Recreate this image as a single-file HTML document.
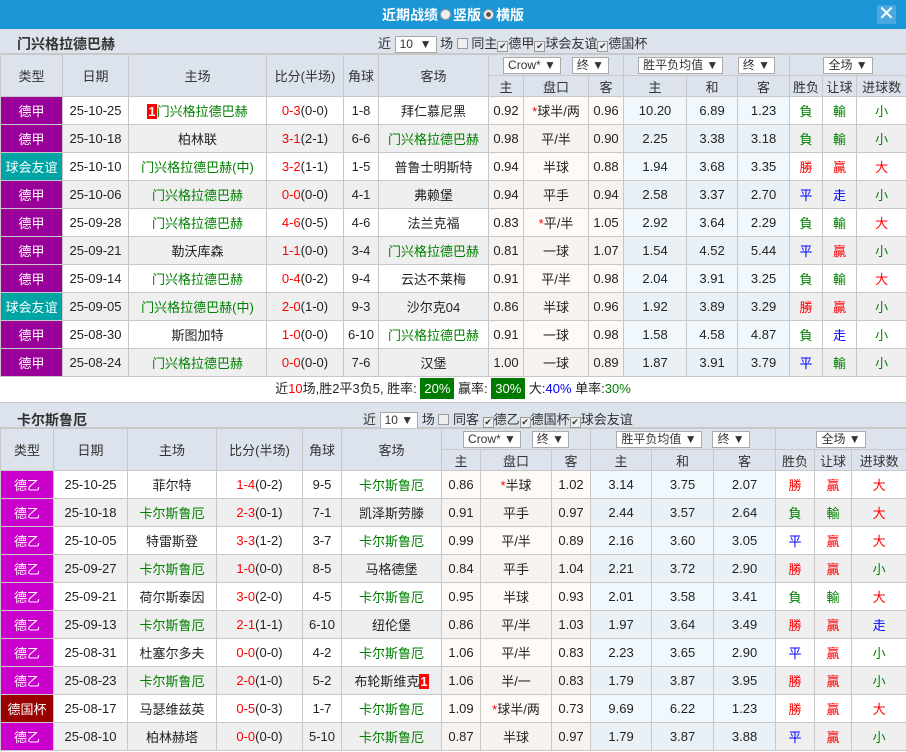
<!DOCTYPE html>
<html><head><meta charset="utf-8">
<style>
*{margin:0;padding:0;box-sizing:border-box}
body{width:906px;height:752px;overflow:hidden;background:#fff;font-family:"Liberation Sans","Noto Sans CJK SC",sans-serif;font-size:13px;color:#222;position:relative}
.top{position:absolute;left:0;top:0;width:906px;height:29px;background:#1b96d6;color:#fff;font-weight:bold;font-size:14px}
.top .t{position:absolute;left:382px;top:5px}
.top .r{display:inline-block;width:11px;height:11px;border-radius:50%;background:#eee;border:1px solid #999;vertical-align:0;margin:0 2px}
.top .r.on{background:radial-gradient(#555 35%,#eee 40%)}
.x{position:absolute;left:877px;top:5px;width:19px;height:19px;background:#4aa8e0;color:#fff;font-size:20px;line-height:18px;text-align:center;font-weight:normal}
.sec{position:absolute;left:0;width:906px;background:#dce3ec;height:25px;border-bottom:1px solid #c8c8c8}
.sec b{position:absolute;left:17px;top:5px;font-size:14px;color:#333}
.sec .c{position:absolute;top:4px;font-size:13px;color:#333;white-space:nowrap}
.sel{display:inline-block;border:1px solid #aaa;background:#fff;padding:0 4px;height:17px;line-height:15px;font-size:12px;vertical-align:middle}
.cb{display:inline-block;width:11px;height:11px;border:1px solid #999;background:#eee;vertical-align:-1px;font-size:9px;line-height:9px;text-align:center;color:#333}
table{position:absolute;left:0;border-collapse:collapse;table-layout:fixed;width:906px}
td{border:1px solid #c8c8c8;text-align:center;white-space:nowrap;overflow:hidden;padding:0}
thead td{background:#dce3ec;height:21px;color:#333}
tbody td{height:28px}
tbody tr:nth-child(even) td{background:#efefef}
tbody td.o{background:#fffaf5!important}
tbody td.p{background:#f0f8fd!important}
tbody tr:nth-child(even) td.o{background:#f7f2ee!important}
tbody tr:nth-child(even) td.p{background:#e9f1f6!important}
td.a{background:#990099!important;color:#fff}
td.f{background:#00a4a4!important;color:#fff}
td.b{background:#cc00cc!important;color:#fff}
td.k{background:#990000!important;color:#fff}
.g{color:#008000}.rd{color:#f00}.bl{color:#00f}.dk{color:#333}
.n{background:#f00;color:#fff;font-weight:bold;padding:0 1px}
.st{color:#f00}
.sum{position:absolute;left:0;top:376px;width:906px;height:26px;text-align:center;line-height:26px;font-size:13px}
.gb{background:#007a00;color:#fff;padding:3px 4px}
</style></head><body>
<div class="top"><span class="t">近期战绩<span class="r"></span>竖版<span class="r on"></span>横版</span><div class="x">✕</div></div>

<div class="sec" style="top:29px"><b>门兴格拉德巴赫</b>
<span class="c" style="left:378px">近 <span class="sel">10 &nbsp;▼</span> 场 <span class="cb"></span> 同主<span class="cb">✔</span>德甲<span class="cb">✔</span>球会友谊<span class="cb">✔</span>德国杯</span></div>

<table style="top:54px">
<colgroup><col style="width:62px"><col style="width:66px"><col style="width:138px"><col style="width:77px"><col style="width:35px"><col style="width:110px"><col style="width:35px"><col style="width:65px"><col style="width:35px"><col style="width:63px"><col style="width:51px"><col style="width:52px"><col style="width:33px"><col style="width:34px"><col style="width:50px"></colgroup>
<thead><tr><td rowspan="2">类型</td><td rowspan="2">日期</td><td rowspan="2">主场</td><td rowspan="2">比分(半场)</td><td rowspan="2">角球</td><td rowspan="2">客场</td><td colspan="3"><span class="sel">Crow* ▼</span> &nbsp; <span class="sel">终 ▼</span></td><td colspan="3"><span class="sel">胜平负均值 ▼</span> &nbsp; &nbsp;<span class="sel">终 ▼</span></td><td colspan="3"><span class="sel">全场 ▼</span></td></tr>
<tr><td>主</td><td>盘口</td><td>客</td><td>主</td><td>和</td><td>客</td><td>胜负</td><td>让球</td><td>进球数</td></tr></thead>
<tbody>
<tr><td class="a">德甲</td><td>25-10-25</td><td class="g"><span class="n">1</span>门兴格拉德巴赫</td><td><span class="rd">0-3</span>(0-0)</td><td>1-8</td><td>拜仁慕尼黑</td><td class="o">0.92</td><td class="o"><span class="st">*</span>球半/两</td><td class="o">0.96</td><td class="p">10.20</td><td class="p">6.89</td><td class="p">1.23</td><td class="g">負</td><td class="g">輸</td><td class="g">小</td></tr>
<tr><td class="a">德甲</td><td>25-10-18</td><td>柏林联</td><td><span class="rd">3-1</span>(2-1)</td><td>6-6</td><td class="g">门兴格拉德巴赫</td><td class="o">0.98</td><td class="o">平/半</td><td class="o">0.90</td><td class="p">2.25</td><td class="p">3.38</td><td class="p">3.18</td><td class="g">負</td><td class="g">輸</td><td class="g">小</td></tr>
<tr><td class="f">球会友谊</td><td>25-10-10</td><td class="g">门兴格拉德巴赫(中)</td><td><span class="rd">3-2</span>(1-1)</td><td>1-5</td><td>普鲁士明斯特</td><td class="o">0.94</td><td class="o">半球</td><td class="o">0.88</td><td class="p">1.94</td><td class="p">3.68</td><td class="p">3.35</td><td class="rd">勝</td><td class="rd">贏</td><td class="rd">大</td></tr>
<tr><td class="a">德甲</td><td>25-10-06</td><td class="g">门兴格拉德巴赫</td><td><span class="rd">0-0</span>(0-0)</td><td>4-1</td><td>弗赖堡</td><td class="o">0.94</td><td class="o">平手</td><td class="o">0.94</td><td class="p">2.58</td><td class="p">3.37</td><td class="p">2.70</td><td class="bl">平</td><td class="bl">走</td><td class="g">小</td></tr>
<tr><td class="a">德甲</td><td>25-09-28</td><td class="g">门兴格拉德巴赫</td><td><span class="rd">4-6</span>(0-5)</td><td>4-6</td><td>法兰克福</td><td class="o">0.83</td><td class="o"><span class="st">*</span>平/半</td><td class="o">1.05</td><td class="p">2.92</td><td class="p">3.64</td><td class="p">2.29</td><td class="g">負</td><td class="g">輸</td><td class="rd">大</td></tr>
<tr><td class="a">德甲</td><td>25-09-21</td><td>勒沃库森</td><td><span class="rd">1-1</span>(0-0)</td><td>3-4</td><td class="g">门兴格拉德巴赫</td><td class="o">0.81</td><td class="o">一球</td><td class="o">1.07</td><td class="p">1.54</td><td class="p">4.52</td><td class="p">5.44</td><td class="bl">平</td><td class="rd">贏</td><td class="g">小</td></tr>
<tr><td class="a">德甲</td><td>25-09-14</td><td class="g">门兴格拉德巴赫</td><td><span class="rd">0-4</span>(0-2)</td><td>9-4</td><td>云达不莱梅</td><td class="o">0.91</td><td class="o">平/半</td><td class="o">0.98</td><td class="p">2.04</td><td class="p">3.91</td><td class="p">3.25</td><td class="g">負</td><td class="g">輸</td><td class="rd">大</td></tr>
<tr><td class="f">球会友谊</td><td>25-09-05</td><td class="g">门兴格拉德巴赫(中)</td><td><span class="rd">2-0</span>(1-0)</td><td>9-3</td><td>沙尔克04</td><td class="o">0.86</td><td class="o">半球</td><td class="o">0.96</td><td class="p">1.92</td><td class="p">3.89</td><td class="p">3.29</td><td class="rd">勝</td><td class="rd">贏</td><td class="g">小</td></tr>
<tr><td class="a">德甲</td><td>25-08-30</td><td>斯图加特</td><td><span class="rd">1-0</span>(0-0)</td><td>6-10</td><td class="g">门兴格拉德巴赫</td><td class="o">0.91</td><td class="o">一球</td><td class="o">0.98</td><td class="p">1.58</td><td class="p">4.58</td><td class="p">4.87</td><td class="g">負</td><td class="bl">走</td><td class="g">小</td></tr>
<tr><td class="a">德甲</td><td>25-08-24</td><td class="g">门兴格拉德巴赫</td><td><span class="rd">0-0</span>(0-0)</td><td>7-6</td><td>汉堡</td><td class="o">1.00</td><td class="o">一球</td><td class="o">0.89</td><td class="p">1.87</td><td class="p">3.91</td><td class="p">3.79</td><td class="bl">平</td><td class="g">輸</td><td class="g">小</td></tr>
</tbody></table>

<div class="sum">近<span class="rd">10</span>场,胜2平3负5, 胜率: <span class="gb">20%</span> 赢率: <span class="gb">30%</span> 大:<span class="bl">40%</span> 单率:<span class="g">30%</span></div>

<div class="sec" style="top:402px;height:26px;border-top:1px solid #c8c8c8"><b style="top:7px">卡尔斯鲁厄</b>
<span class="c" style="left:363px;top:6px">近 <span class="sel">10 ▼</span> 场 <span class="cb"></span> 同客 <span class="cb">✔</span>德乙<span class="cb">✔</span>德国杯<span class="cb">✔</span>球会友谊</span></div>

<table style="top:428px">
<colgroup><col style="width:53px"><col style="width:74px"><col style="width:89px"><col style="width:86px"><col style="width:39px"><col style="width:100px"><col style="width:39px"><col style="width:71px"><col style="width:39px"><col style="width:61px"><col style="width:62px"><col style="width:62px"><col style="width:39px"><col style="width:37px"><col style="width:55px"></colgroup>
<thead><tr><td rowspan="2">类型</td><td rowspan="2">日期</td><td rowspan="2">主场</td><td rowspan="2">比分(半场)</td><td rowspan="2">角球</td><td rowspan="2">客场</td><td colspan="3"><span class="sel">Crow* ▼</span> &nbsp; <span class="sel">终 ▼</span></td><td colspan="3"><span class="sel">胜平负均值 ▼</span> &nbsp; <span class="sel">终 ▼</span></td><td colspan="3"><span class="sel">全场 ▼</span></td></tr>
<tr><td>主</td><td>盘口</td><td>客</td><td>主</td><td>和</td><td>客</td><td>胜负</td><td>让球</td><td>进球数</td></tr></thead>
<tbody>
<tr><td class="b">德乙</td><td>25-10-25</td><td>菲尔特</td><td><span class="rd">1-4</span>(0-2)</td><td>9-5</td><td class="g">卡尔斯鲁厄</td><td class="o">0.86</td><td class="o"><span class="st">*</span>半球</td><td class="o">1.02</td><td class="p">3.14</td><td class="p">3.75</td><td class="p">2.07</td><td class="rd">勝</td><td class="rd">贏</td><td class="rd">大</td></tr>
<tr><td class="b">德乙</td><td>25-10-18</td><td class="g">卡尔斯鲁厄</td><td><span class="rd">2-3</span>(0-1)</td><td>7-1</td><td>凯泽斯劳滕</td><td class="o">0.91</td><td class="o">平手</td><td class="o">0.97</td><td class="p">2.44</td><td class="p">3.57</td><td class="p">2.64</td><td class="g">負</td><td class="g">輸</td><td class="rd">大</td></tr>
<tr><td class="b">德乙</td><td>25-10-05</td><td>特雷斯登</td><td><span class="rd">3-3</span>(1-2)</td><td>3-7</td><td class="g">卡尔斯鲁厄</td><td class="o">0.99</td><td class="o">平/半</td><td class="o">0.89</td><td class="p">2.16</td><td class="p">3.60</td><td class="p">3.05</td><td class="bl">平</td><td class="rd">贏</td><td class="rd">大</td></tr>
<tr><td class="b">德乙</td><td>25-09-27</td><td class="g">卡尔斯鲁厄</td><td><span class="rd">1-0</span>(0-0)</td><td>8-5</td><td>马格德堡</td><td class="o">0.84</td><td class="o">平手</td><td class="o">1.04</td><td class="p">2.21</td><td class="p">3.72</td><td class="p">2.90</td><td class="rd">勝</td><td class="rd">贏</td><td class="g">小</td></tr>
<tr><td class="b">德乙</td><td>25-09-21</td><td>荷尔斯泰因</td><td><span class="rd">3-0</span>(2-0)</td><td>4-5</td><td class="g">卡尔斯鲁厄</td><td class="o">0.95</td><td class="o">半球</td><td class="o">0.93</td><td class="p">2.01</td><td class="p">3.58</td><td class="p">3.41</td><td class="g">負</td><td class="g">輸</td><td class="rd">大</td></tr>
<tr><td class="b">德乙</td><td>25-09-13</td><td class="g">卡尔斯鲁厄</td><td><span class="rd">2-1</span>(1-1)</td><td>6-10</td><td>纽伦堡</td><td class="o">0.86</td><td class="o">平/半</td><td class="o">1.03</td><td class="p">1.97</td><td class="p">3.64</td><td class="p">3.49</td><td class="rd">勝</td><td class="rd">贏</td><td class="bl">走</td></tr>
<tr><td class="b">德乙</td><td>25-08-31</td><td>杜塞尔多夫</td><td><span class="rd">0-0</span>(0-0)</td><td>4-2</td><td class="g">卡尔斯鲁厄</td><td class="o">1.06</td><td class="o">平/半</td><td class="o">0.83</td><td class="p">2.23</td><td class="p">3.65</td><td class="p">2.90</td><td class="bl">平</td><td class="rd">贏</td><td class="g">小</td></tr>
<tr><td class="b">德乙</td><td>25-08-23</td><td class="g">卡尔斯鲁厄</td><td><span class="rd">2-0</span>(1-0)</td><td>5-2</td><td>布轮斯维克<span class="n">1</span></td><td class="o">1.06</td><td class="o">半/一</td><td class="o">0.83</td><td class="p">1.79</td><td class="p">3.87</td><td class="p">3.95</td><td class="rd">勝</td><td class="rd">贏</td><td class="g">小</td></tr>
<tr><td class="k">德国杯</td><td>25-08-17</td><td>马瑟维兹英</td><td><span class="rd">0-5</span>(0-3)</td><td>1-7</td><td class="g">卡尔斯鲁厄</td><td class="o">1.09</td><td class="o"><span class="st">*</span>球半/两</td><td class="o">0.73</td><td class="p">9.69</td><td class="p">6.22</td><td class="p">1.23</td><td class="rd">勝</td><td class="rd">贏</td><td class="rd">大</td></tr>
<tr><td class="b">德乙</td><td>25-08-10</td><td>柏林赫塔</td><td><span class="rd">0-0</span>(0-0)</td><td>5-10</td><td class="g">卡尔斯鲁厄</td><td class="o">0.87</td><td class="o">半球</td><td class="o">0.97</td><td class="p">1.79</td><td class="p">3.87</td><td class="p">3.88</td><td class="bl">平</td><td class="rd">贏</td><td class="g">小</td></tr>
</tbody></table>
</body></html>
